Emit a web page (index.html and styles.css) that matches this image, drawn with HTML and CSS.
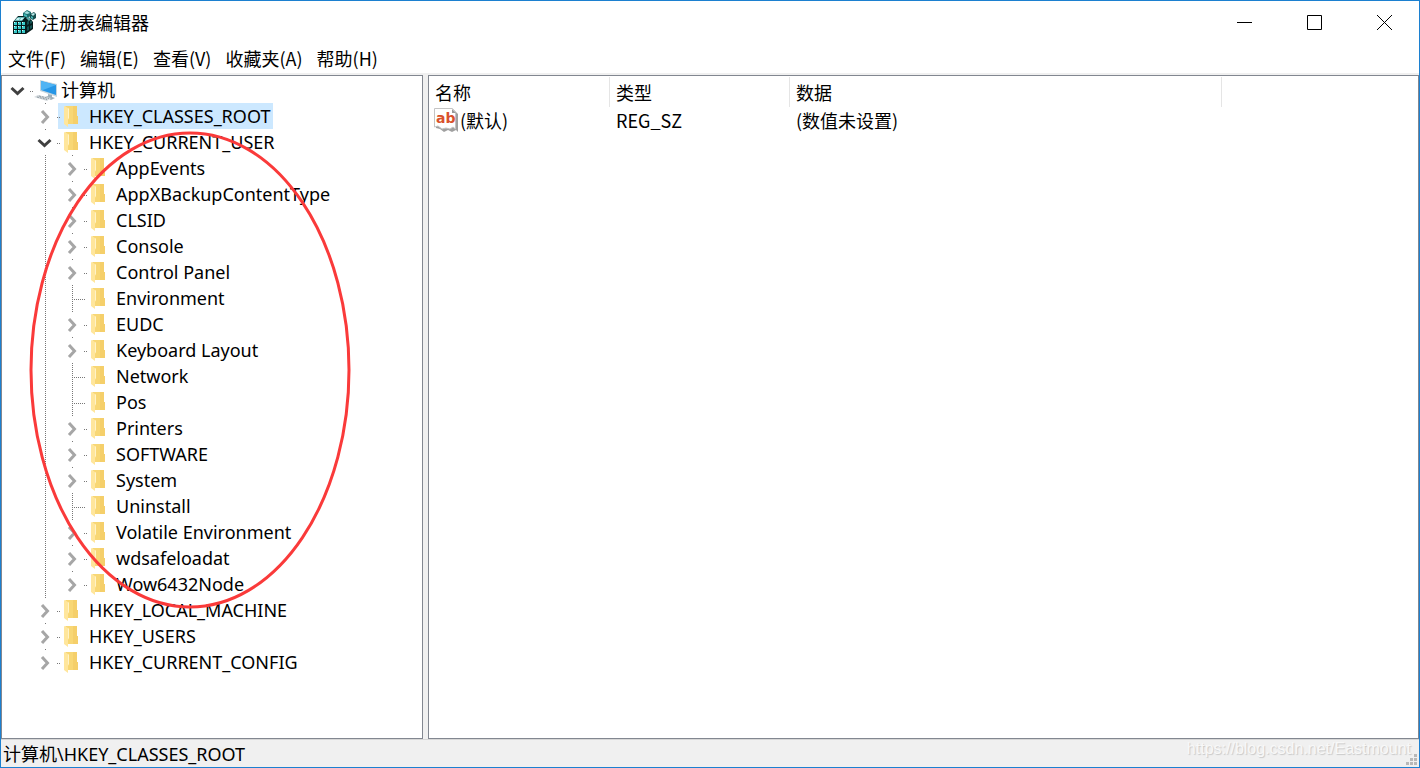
FILE: index.html
```html
<!DOCTYPE html>
<html lang="zh-CN">
<head>
	<meta charset="UTF-8">
	<title>注册表编辑器</title>
	<link rel="stylesheet" href="styles.css">
</head>
<body>
	<svg class="symbols" aria-hidden="true">
		<symbol id="folder" viewBox="0 0 14 21">
			<path d="M1 0H13V16L14 17V18H4V4Z" fill="#f8d775"/>
			<path d="M9 0H13V10H14V18H9Z" fill="#f5cf6a"/>
			<path d="M0 0L4 2L5 3V12L4 14V21L0 18Z" fill="#ffe69c"/>
			<path d="M4 2L5 3V12L4 13Z" fill="#fff3c8"/>
		</symbol>
		<symbol id="closed" viewBox="0 0 30 26">
			<path d="M10 8L15.500 14L10 20" fill="none" stroke="#a6a6a6" stroke-width="3"/>
			<path d="M25 14.500h1m1 0h1" stroke="#777"/>
		</symbol>
		<symbol id="open" viewBox="0 0 30 26">
			<path d="M6.500 11L12.500 16.500L18.500 11" fill="none" stroke="#404040" stroke-width="3"/>
			<path d="M25 14.500h1m1 0h1" stroke="#777"/>
		</symbol>
	</svg>

	<div class="window">
		<header class="titlebar">
			<svg class="app-icon" viewBox="0 0 26 26">
				<path d="M2 13L7 7H14L19 9L22 13V20L15 25H2Z" fill="#061c1c"/>
				<path d="M3 12L7 8H14L11 12Z" fill="#5fb5b5"/>
				<path d="M6 9h3l-1 2H5zM10 9h3l-2 2H9z" fill="#c5f3f3"/>
				<path d="M3 13h3v3H3zM7 13h3v3H7zM11 13h3v3h-3zM3 17h3v3H3zM7 17h3v3H7zM11 17h3v3h-3zM3 21h3v3H3zM7 21h3v3H7zM11 21h3v3h-3z" fill="#38c9c9"/>
				<path d="M3 13h1v1H3zM7 13h1v1H7zM11 13h1v1h-1zM3 17h1v1H3zM7 17h1v1H7zM11 17h1v1h-1zM3 21h1v1H3zM7 21h1v1H7zM11 21h1v1h-1z" fill="#d6ffff"/>
				<path d="M16 13l2-2v4l-2 1zM19 12l2-1v3l-2 1zM16 18l2-1v4l-2 1zM19 17l2-1v3l-2 1z" fill="#145454"/>
				<path d="M12 4L16 1L20 3V7L16 9L12 7Z" fill="#1b6f6f"/>
				<path d="M13 4L16 2L19 4L16 5Z" fill="#a5e0e0"/>
				<path d="M13 5l3 1v2l-3-1z" fill="#42b9b9"/>
				<path d="M19 5L23 3L25 5V9L22 11L19 9Z" fill="#164e4e"/>
				<path d="M20 5L23 4L24 5L22 7Z" fill="#b8eaea"/>
				<path d="M20 7l2 1v2l-2-1z" fill="#42b9b9"/>
				<path d="M15 9l2-1 3 2-2 2z" fill="#57a8a8"/>
			</svg>
			<h1>注册表编辑器</h1>
			<div class="controls">
				<button aria-label="最小化"><svg viewBox="0 0 15 15"><path d="M0 7.5H15" /></svg></button>
				<button aria-label="最大化"><svg viewBox="0 0 15 15"><path d="M.5 .5H14.5V14.5H.5Z" /></svg></button>
				<button aria-label="关闭"><svg viewBox="0 0 15 15"><path d="M0 0L15 15M15 0L0 15" /></svg></button>
			</div>
		</header>

		<nav class="menu">
			<button>文件(F)</button>
			<button>编辑(E)</button>
			<button>查看(V)</button>
			<button>收藏夹(A)</button>
			<button>帮助(H)</button>
		</nav>

		<main class="panes">
			<section class="pane tree-pane">
				<ul class="tree">
					<li>
						<div class="row root">
							<button class="toggle" aria-label="折叠"><svg><use href="#open"/></svg></button>
							<a class="key" href="#">
								<svg class="computer" viewBox="0 0 24 23">
									<path d="M6 1L23 5V18L6 12Z" fill="#c5d5de"/>
									<path d="M7 2L22 6V16L7 11Z" fill="#2696e6"/>
									<path d="M7 2L22 6L9 11L7 11Z" fill="#4fb4f4"/>
									<path d="M14 15L18 16V18L21 19L17 21L11 18L14 17Z" fill="#9fb0ba"/>
									<path d="M0 18L4 16L17 19L13 22Z" fill="#d2d8dc"/>
									<path d="M3 18L13 20.500M5 17L15 19.500" stroke="#8f9ba2" stroke-dasharray="2 1" fill="none"/>
								</svg>计算机
							</a>
						</div>
						<ul>
							<li><div class="row"><button class="toggle" aria-label="展开"><svg><use href="#closed"/></svg></button><a class="key selected" href="#"><svg><use href="#folder"/></svg>HKEY_CLASSES_ROOT</a></div></li>
							<li>
								<div class="row"><button class="toggle" aria-label="折叠"><svg><use href="#open"/></svg></button><a class="key" href="#"><svg><use href="#folder"/></svg>HKEY_CURRENT_USER</a></div>
								<ul class="branch">
									<li><div class="row"><button class="toggle" aria-label="展开"><svg><use href="#closed"/></svg></button><a class="key" href="#"><svg><use href="#folder"/></svg>AppEvents</a></div></li>
									<li><div class="row"><button class="toggle" aria-label="展开"><svg><use href="#closed"/></svg></button><a class="key" href="#"><svg><use href="#folder"/></svg>AppXBackupContentType</a></div></li>
									<li><div class="row"><button class="toggle" aria-label="展开"><svg><use href="#closed"/></svg></button><a class="key" href="#"><svg><use href="#folder"/></svg>CLSID</a></div></li>
									<li><div class="row"><button class="toggle" aria-label="展开"><svg><use href="#closed"/></svg></button><a class="key" href="#"><svg><use href="#folder"/></svg>Console</a></div></li>
									<li><div class="row"><button class="toggle" aria-label="展开"><svg><use href="#closed"/></svg></button><a class="key" href="#"><svg><use href="#folder"/></svg>Control Panel</a></div></li>
									<li><div class="row"><span class="leaf"></span><a class="key" href="#"><svg><use href="#folder"/></svg>Environment</a></div></li>
									<li><div class="row"><button class="toggle" aria-label="展开"><svg><use href="#closed"/></svg></button><a class="key" href="#"><svg><use href="#folder"/></svg>EUDC</a></div></li>
									<li><div class="row"><button class="toggle" aria-label="展开"><svg><use href="#closed"/></svg></button><a class="key" href="#"><svg><use href="#folder"/></svg>Keyboard Layout</a></div></li>
									<li><div class="row"><span class="leaf"></span><a class="key" href="#"><svg><use href="#folder"/></svg>Network</a></div></li>
									<li><div class="row"><span class="leaf"></span><a class="key" href="#"><svg><use href="#folder"/></svg>Pos</a></div></li>
									<li><div class="row"><button class="toggle" aria-label="展开"><svg><use href="#closed"/></svg></button><a class="key" href="#"><svg><use href="#folder"/></svg>Printers</a></div></li>
									<li><div class="row"><button class="toggle" aria-label="展开"><svg><use href="#closed"/></svg></button><a class="key" href="#"><svg><use href="#folder"/></svg>SOFTWARE</a></div></li>
									<li><div class="row"><button class="toggle" aria-label="展开"><svg><use href="#closed"/></svg></button><a class="key" href="#"><svg><use href="#folder"/></svg>System</a></div></li>
									<li><div class="row"><span class="leaf"></span><a class="key" href="#"><svg><use href="#folder"/></svg>Uninstall</a></div></li>
									<li><div class="row"><button class="toggle" aria-label="展开"><svg><use href="#closed"/></svg></button><a class="key" href="#"><svg><use href="#folder"/></svg>Volatile Environment</a></div></li>
									<li><div class="row"><button class="toggle" aria-label="展开"><svg><use href="#closed"/></svg></button><a class="key" href="#"><svg><use href="#folder"/></svg>wdsafeloadat</a></div></li>
									<li><div class="row"><button class="toggle" aria-label="展开"><svg><use href="#closed"/></svg></button><a class="key" href="#"><svg><use href="#folder"/></svg>Wow6432Node</a></div></li>
								</ul>
							</li>
							<li><div class="row"><button class="toggle" aria-label="展开"><svg><use href="#closed"/></svg></button><a class="key" href="#"><svg><use href="#folder"/></svg>HKEY_LOCAL_MACHINE</a></div></li>
							<li><div class="row"><button class="toggle" aria-label="展开"><svg><use href="#closed"/></svg></button><a class="key" href="#"><svg><use href="#folder"/></svg>HKEY_USERS</a></div></li>
							<li><div class="row"><button class="toggle" aria-label="展开"><svg><use href="#closed"/></svg></button><a class="key" href="#"><svg><use href="#folder"/></svg>HKEY_CURRENT_CONFIG</a></div></li>
						</ul>
					</li>
				</ul>
				<svg class="marker" viewBox="0 0 322 478">
					<ellipse cx="161" cy="239" rx="159" ry="237"/>
				</svg>
			</section>

			<section class="pane value-pane">
				<table>
					<colgroup><col class="col-name"><col class="col-type"><col class="col-data"><col></colgroup>
					<thead>
						<tr><th>名称</th><th>类型</th><th>数据</th><th></th></tr>
					</thead>
					<tbody>
						<tr>
							<td class="name">
								<div>
									<svg viewBox="0 0 25 25">
										<path d="M2 2H20L24 6V24L22 22L18 24L14 22L10 24L6 21L2 20Z" fill="#a0a0a0"/>
										<path d="M.5 .5H18.500L21.500 4V21L19 19L16 21L12 20L8 21L4 18L.5 19Z" fill="#fff" stroke="#c4c4c4"/>
										<path d="M18 1V5H22Z" fill="#999"/>
										<text x="2" y="15">ab</text>
									</svg>(默认)
								</div>
							</td>
							<td>REG_SZ</td>
							<td>(数值未设置)</td>
							<td></td>
						</tr>
					</tbody>
				</table>
			</section>
		</main>

		<footer class="statusbar">
			<span>计算机\HKEY_CLASSES_ROOT</span>
			<span class="watermark">https://blog.csdn.net/Eastmount</span>
			<svg class="grip" viewBox="0 0 11 11">
				<path d="M8 0h3v3H8zM4 4h3v3H4zM8 4h3v3H8zM0 8h3v3H0zM4 8h3v3H4zM8 8h3v3H8z"/>
			</svg>
		</footer>
	</div>
</body>
</html>
```
FILE: styles.css
```css
* {
	box-sizing: border-box;
}

body {
	margin: 0;
	font-family: "Noto Sans", "Noto Sans CJK SC", sans-serif;
	font-size: 18px;
	color: #000;
}

button {
	padding: 0;
	border: 0;
	background: none;
	font: inherit;
	color: inherit;
}

.symbols {
	position: absolute;
	width: 0;
	height: 0;
}

.window {
	display: flex;
	flex-direction: column;
	height: 100vh;
	min-height: 700px;
	border: 1px solid #1c80d0;
	background: #fff;
}

.titlebar {
	display: flex;
	align-items: center;
	height: 42px;
	padding-left: 10px;
}

.app-icon {
	width: 26px;
	height: 26px;
}

.titlebar h1 {
	flex: 1;
	margin: 0 0 0 4px;
	font-size: 18px;
	font-weight: normal;
}

.controls {
	display: flex;
}

.controls button {
	display: flex;
	align-items: center;
	justify-content: center;
	width: 70px;
	height: 42px;
}

.controls svg {
	width: 15px;
	height: 15px;
	fill: none;
	stroke: #000;
}

.menu {
	display: flex;
	gap: 14px;
	height: 30px;
	padding-left: 7px;
	font-family: "Noto Sans CJK SC", sans-serif;
}

.panes {
	flex: 1;
	display: flex;
	gap: 5px;
	min-height: 0;
	padding-top: 2px;
	background: #f0f0f0;
}

.pane {
	border: 1px solid #828790;
	background: #fff;
}

.tree-pane {
	position: relative;
	flex: 0 0 422px;
	padding: 1px 0 0 3px;
}

.tree,
.tree ul {
	margin: 0;
	padding: 0;
	list-style: none;
}

.tree ul {
	padding-left: 27px;
}

.tree .branch {
	background: repeating-linear-gradient(#777 0 1px, #fff 1px 2px) 13px 0 / 1px 100% no-repeat;
}

.row {
	display: flex;
	height: 26px;
}

.toggle {
	width: 26px;
	background: linear-gradient(#777, #777) 13px 0 / 1px 1px no-repeat;
}

.root .toggle {
	background: none;
}

.toggle svg {
	position: relative;
	display: block;
	width: 30px;
	height: 26px;
}

.leaf {
	width: 26px;
	background:
		repeating-linear-gradient(#777 0 1px, transparent 1px 2px) 13px 0 / 1px 26px no-repeat,
		repeating-linear-gradient(90deg, #777 0 1px, transparent 1px 2px) 13px 14px / 13px 1px no-repeat;
}

.key {
	display: flex;
	align-items: center;
	padding: 0 3px 0 6px;
	line-height: 26px;
	color: #000;
	text-decoration: none;
	white-space: nowrap;
}

.key svg {
	width: 14px;
	height: 21px;
	margin-right: 11px;
}

.key .computer {
	width: 24px;
	height: 23px;
	margin-right: 3px;
}

.root .key {
	padding-left: 3px;
}

.selected {
	background: #cce8ff;
}

/* hand-drawn style circle over the user keys */
.marker {
	position: absolute;
	left: 27px;
	top: 55px;
	width: 322px;
	height: 478px;
	fill: none;
	stroke: #fa3a3a;
	stroke-width: 3;
	pointer-events: none;
}

.value-pane {
	flex: 1;
	padding-top: 1px;
	font-family: "Noto Sans CJK SC", sans-serif;
}

.value-pane table {
	width: 100%;
	table-layout: fixed;
	border-collapse: separate;
	border-spacing: 0;
}

.col-name {
	width: 181px;
}

.col-type {
	width: 180px;
}

.col-data {
	width: 432px;
}

th {
	height: 30px;
	padding: 0 6px;
	border-right: 1px solid #e5e5e5;
	font-weight: normal;
	line-height: 30px;
	text-align: left;
}

th:last-child {
	border-right: 0;
}

td {
	height: 26px;
	padding: 0 6px;
	line-height: 26px;
}

td.name {
	padding-left: 5px;
}

td.name div {
	display: flex;
	align-items: center;
	gap: 1px;
}

td.name svg {
	width: 25px;
	height: 25px;
}

td.name text {
	font-family: "DejaVu Sans", sans-serif;
	font-size: 14px;
	font-weight: bold;
	fill: #d9512c;
}

.statusbar {
	position: relative;
	display: flex;
	align-items: center;
	height: 28px;
	padding: 0 8px 2px 2px;
	border-top: 1px solid #d7d7d7;
	background: #f0f0f0;
}

.watermark {
	margin-left: auto;
	padding-bottom: 8px;
	font-family: "Liberation Sans", sans-serif;
	font-size: 16px;
	color: #f8f8f8;
	text-shadow: 1px 1px 1px #c8c8c8;
}

/* sits in the window corner, over the status text */
.grip {
	position: absolute;
	right: 2px;
	bottom: 2px;
	width: 11px;
	height: 11px;
	fill: #b8b8b8;
}
```
